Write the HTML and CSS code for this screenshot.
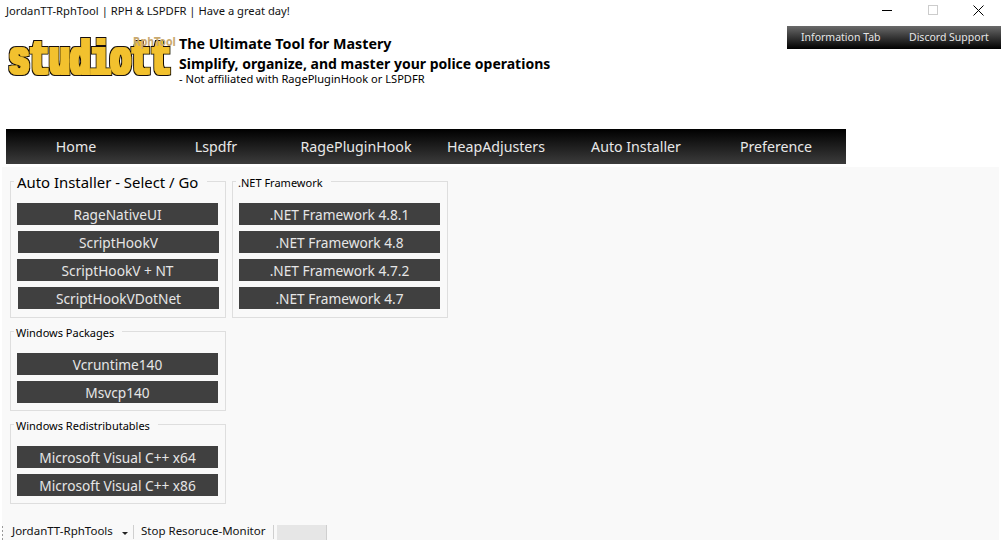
FILE: index.html
```html
<!DOCTYPE html>
<html lang="en">
<head>
<meta charset="utf-8">
<title>JordanTT-RphTool</title>
<link rel="stylesheet" href="styles.css">
</head>
<body>
<header class="titlebar">
  <span class="title">JordanTT-RphTool | RPH &amp; LSPDFR | Have a great day!</span>
  <div class="winctl">
    <button class="winbtn" aria-label="Minimize"><svg width="10" height="10" viewBox="0 0 10 10"><path d="M0 5.5H10" stroke="#000" stroke-width="1"/></svg></button>
    <button class="winbtn" aria-label="Maximize"><svg width="10" height="10" viewBox="0 0 10 10"><rect x=".5" y=".5" width="9" height="9" fill="none" stroke="#ccc"/></svg></button>
    <button class="winbtn" aria-label="Close"><svg width="11" height="11" viewBox="0 0 11 11"><path d="M.5.5l10 10M10.5.5l-10 10" stroke="#000" stroke-width="1" fill="none"/></svg></button>
  </div>
</header>
<section class="brand">
  <svg class="logo" width="170" height="70" viewBox="0 0 170 70" role="img" aria-label="studiott RphTool">
    <defs>
      <filter id="blocky" filterUnits="userSpaceOnUse" x="0" y="0" width="170" height="70">
        <feMorphology in="SourceGraphic" operator="dilate" radius="1.9 1.1" result="fat"/>
        <feMorphology in="fat" operator="dilate" radius="1.3" result="outer"/>
        <feFlood flood-color="#14110a"/>
        <feComposite in2="outer" operator="in" result="edge"/>
        <feMerge><feMergeNode in="edge"/><feMergeNode in="fat"/></feMerge>
      </filter>
    </defs>
    <g filter="url(#blocky)">
      <text class="logo-main" transform="translate(3 53.500) scale(.705 1)">studiott</text>
    </g>
    <text class="logo-sub" transform="translate(127 25.500) scale(.8 1)">RphTool</text>
  </svg>
  <div class="tagline">
    <h1>The Ultimate Tool for Mastery</h1>
    <h2>Simplify, organize, and master your police operations</h2>
    <p>- Not affiliated with RagePluginHook or LSPDFR</p>
  </div>
  <nav class="topmenu">
    <a>Information Tab</a>
    <a>Discord Support</a>
  </nav>
</section>
<nav class="mainnav">
  <a>Home</a><a>Lspdfr</a><a>RagePluginHook</a><a>HeapAdjusters</a><a>Auto Installer</a><a>Preference</a>
</nav>
<main class="panel">
  <div class="columns">
    <div class="col">
      <section class="group group-tall">
        <h3 class="legend legend-large">Auto Installer - Select / Go</h3>
        <button class="btn">RageNativeUI</button>
        <button class="btn btn-shift">ScriptHookV</button>
        <button class="btn">ScriptHookV + NT</button>
        <button class="btn btn-shift">ScriptHookVDotNet</button>
      </section>
      <section class="group">
        <h3 class="legend">Windows Packages</h3>
        <button class="btn">Vcruntime140</button>
        <button class="btn">Msvcp140</button>
      </section>
      <section class="group">
        <h3 class="legend">Windows Redistributables</h3>
        <button class="btn">Microsoft Visual C++ x64</button>
        <button class="btn">Microsoft Visual C++ x86</button>
      </section>
    </div>
    <div class="col">
      <section class="group group-tall">
        <h3 class="legend">.NET Framework</h3>
        <button class="btn">.NET Framework 4.8.1</button>
        <button class="btn">.NET Framework 4.8</button>
        <button class="btn">.NET Framework 4.7.2</button>
        <button class="btn">.NET Framework 4.7</button>
      </section>
    </div>
  </div>
  <footer class="status">
    <span class="grip"></span>
    <span class="st-item">JordanTT-RphTools</span>
    <span class="caret"></span>
    <span class="sep"></span>
    <span class="st-item st-stop">Stop Resoruce-Monitor</span>
    <span class="sep sep-last"></span>
    <span class="progress"></span>
  </footer>
</main>
</body>
</html>
```
FILE: styles.css
```css
* { box-sizing: border-box; }
html, body { margin: 0; height: 100%; overflow: hidden; }
body {
  display: flex;
  flex-direction: column;
  background: #fff;
  color: #000;
  font-family: "Noto Sans", "Open Sans", sans-serif;
}
.titlebar {
  height: 20px;
  flex: none;
  display: flex;
  align-items: flex-start;
  justify-content: space-between;
  padding-left: 6px;
}
.title { font-size: 11.2px; line-height: 22px; color: #111; }
.winctl { display: flex; }
.winbtn {
  width: 45.5px;
  height: 20px;
  padding: 0;
  border: 0;
  background: none;
  display: flex;
  align-items: center;
  justify-content: center;
}
.brand {
  height: 109px;
  flex: none;
  display: flex;
  align-items: flex-start;
  padding-left: 6px;
}
.logo { flex: none; }
.logo-main {
  font-family: "Liberation Mono", monospace;
  font-weight: 700;
  font-size: 48px;
  fill: #f2c12e;
}
.logo-sub {
  font-family: "DejaVu Sans", sans-serif;
  font-weight: 700;
  font-size: 12px;
  fill: #c9a970;
}
.tagline { margin: 14px 0 0 3px; }
.tagline h1, .tagline h2 {
  margin: 0;
  font-size: 14px;
  font-weight: 700;
  line-height: 20px;
}
.tagline h1 { font-size: 14.3px; }
.tagline h2 { line-height: 19px; }
.tagline p { margin: 0; font-size: 11.1px; line-height: 11px; }
.topmenu {
  margin: 6px 0 0 auto;
  width: 214px;
  height: 23px;
  display: flex;
  background: linear-gradient(#6a6a6a, #000);
  color: #e6e6e6;
  font-size: 10.5px;
  line-height: 23px;
}
.topmenu a { padding-left: 14px; width: 50%; white-space: nowrap; }
.topmenu a + a { padding-left: 15px; }
.mainnav {
  flex: none;
  margin-left: 6px;
  width: 840px;
  height: 35px;
  display: flex;
  background: linear-gradient(#000, #3c3c3c);
  color: #e8e8e8;
  font-size: 14.2px;
  line-height: 35px;
}
.mainnav a { flex: 1; text-align: center; }
.panel {
  flex: 1;
  margin: 3px 2px 0;
  background: #f9f9f9;
  display: flex;
  flex-direction: column;
  padding-top: 14px;
}
.columns { display: flex; gap: 6px; padding-left: 8px; }
.col { display: flex; flex-direction: column; gap: 13px; width: 216px; }
.group {
  position: relative;
  height: 80px;
  border: 1px solid #dedede;
  padding: 21px 0 0 6px;
  display: flex;
  flex-direction: column;
  align-items: flex-start;
  gap: 6px;
}
.group-tall { height: 137px; }
.legend {
  position: absolute;
  top: -6px;
  left: 3px;
  margin: 0;
  padding: 0 8px 0 2px;
  background: #f9f9f9;
  font-size: 11px;
  font-weight: 400;
  line-height: 14px;
  white-space: nowrap;
}
.legend-large { top: -10px; padding: 0 9px 0 3px; font-size: 14.9px; line-height: 20px; }
.btn {
  width: 201px;
  height: 22px;
  padding: 2px 0 0;
  border: 0;
  background: #404040;
  color: #e6e6e6;
  font-family: inherit;
  font-size: 13.7px;
  line-height: 20px;
  text-align: center;
}
.btn-shift { margin-left: 1px; }
.status {
  margin-top: auto;
  height: 15px;
  display: flex;
  align-items: stretch;
  font-size: 11.5px;
  line-height: 12px;
  color: #111;
}
.grip {
  width: 1px;
  margin: 1px 0 0;
  background: repeating-linear-gradient(#999 0 2px, transparent 2px 4px);
}
.st-item { margin-left: 9px; white-space: nowrap; width: 105px; }
.caret {
  align-self: center;
  margin: 1px 0 0 5px;
  border: 3px solid transparent;
  border-top-color: #222;
  border-bottom: 0;
}
.sep { width: 1px; margin-left: 5px; height: 14px; background: #cfcfcf; }
.sep-last { margin-left: 4px; }
.st-stop { margin-left: 7px; width: 128px; }
.progress { width: 50px; margin-left: 3px; background: #e6e6e6; border-right: 1px solid #cfcfcf; }
```
